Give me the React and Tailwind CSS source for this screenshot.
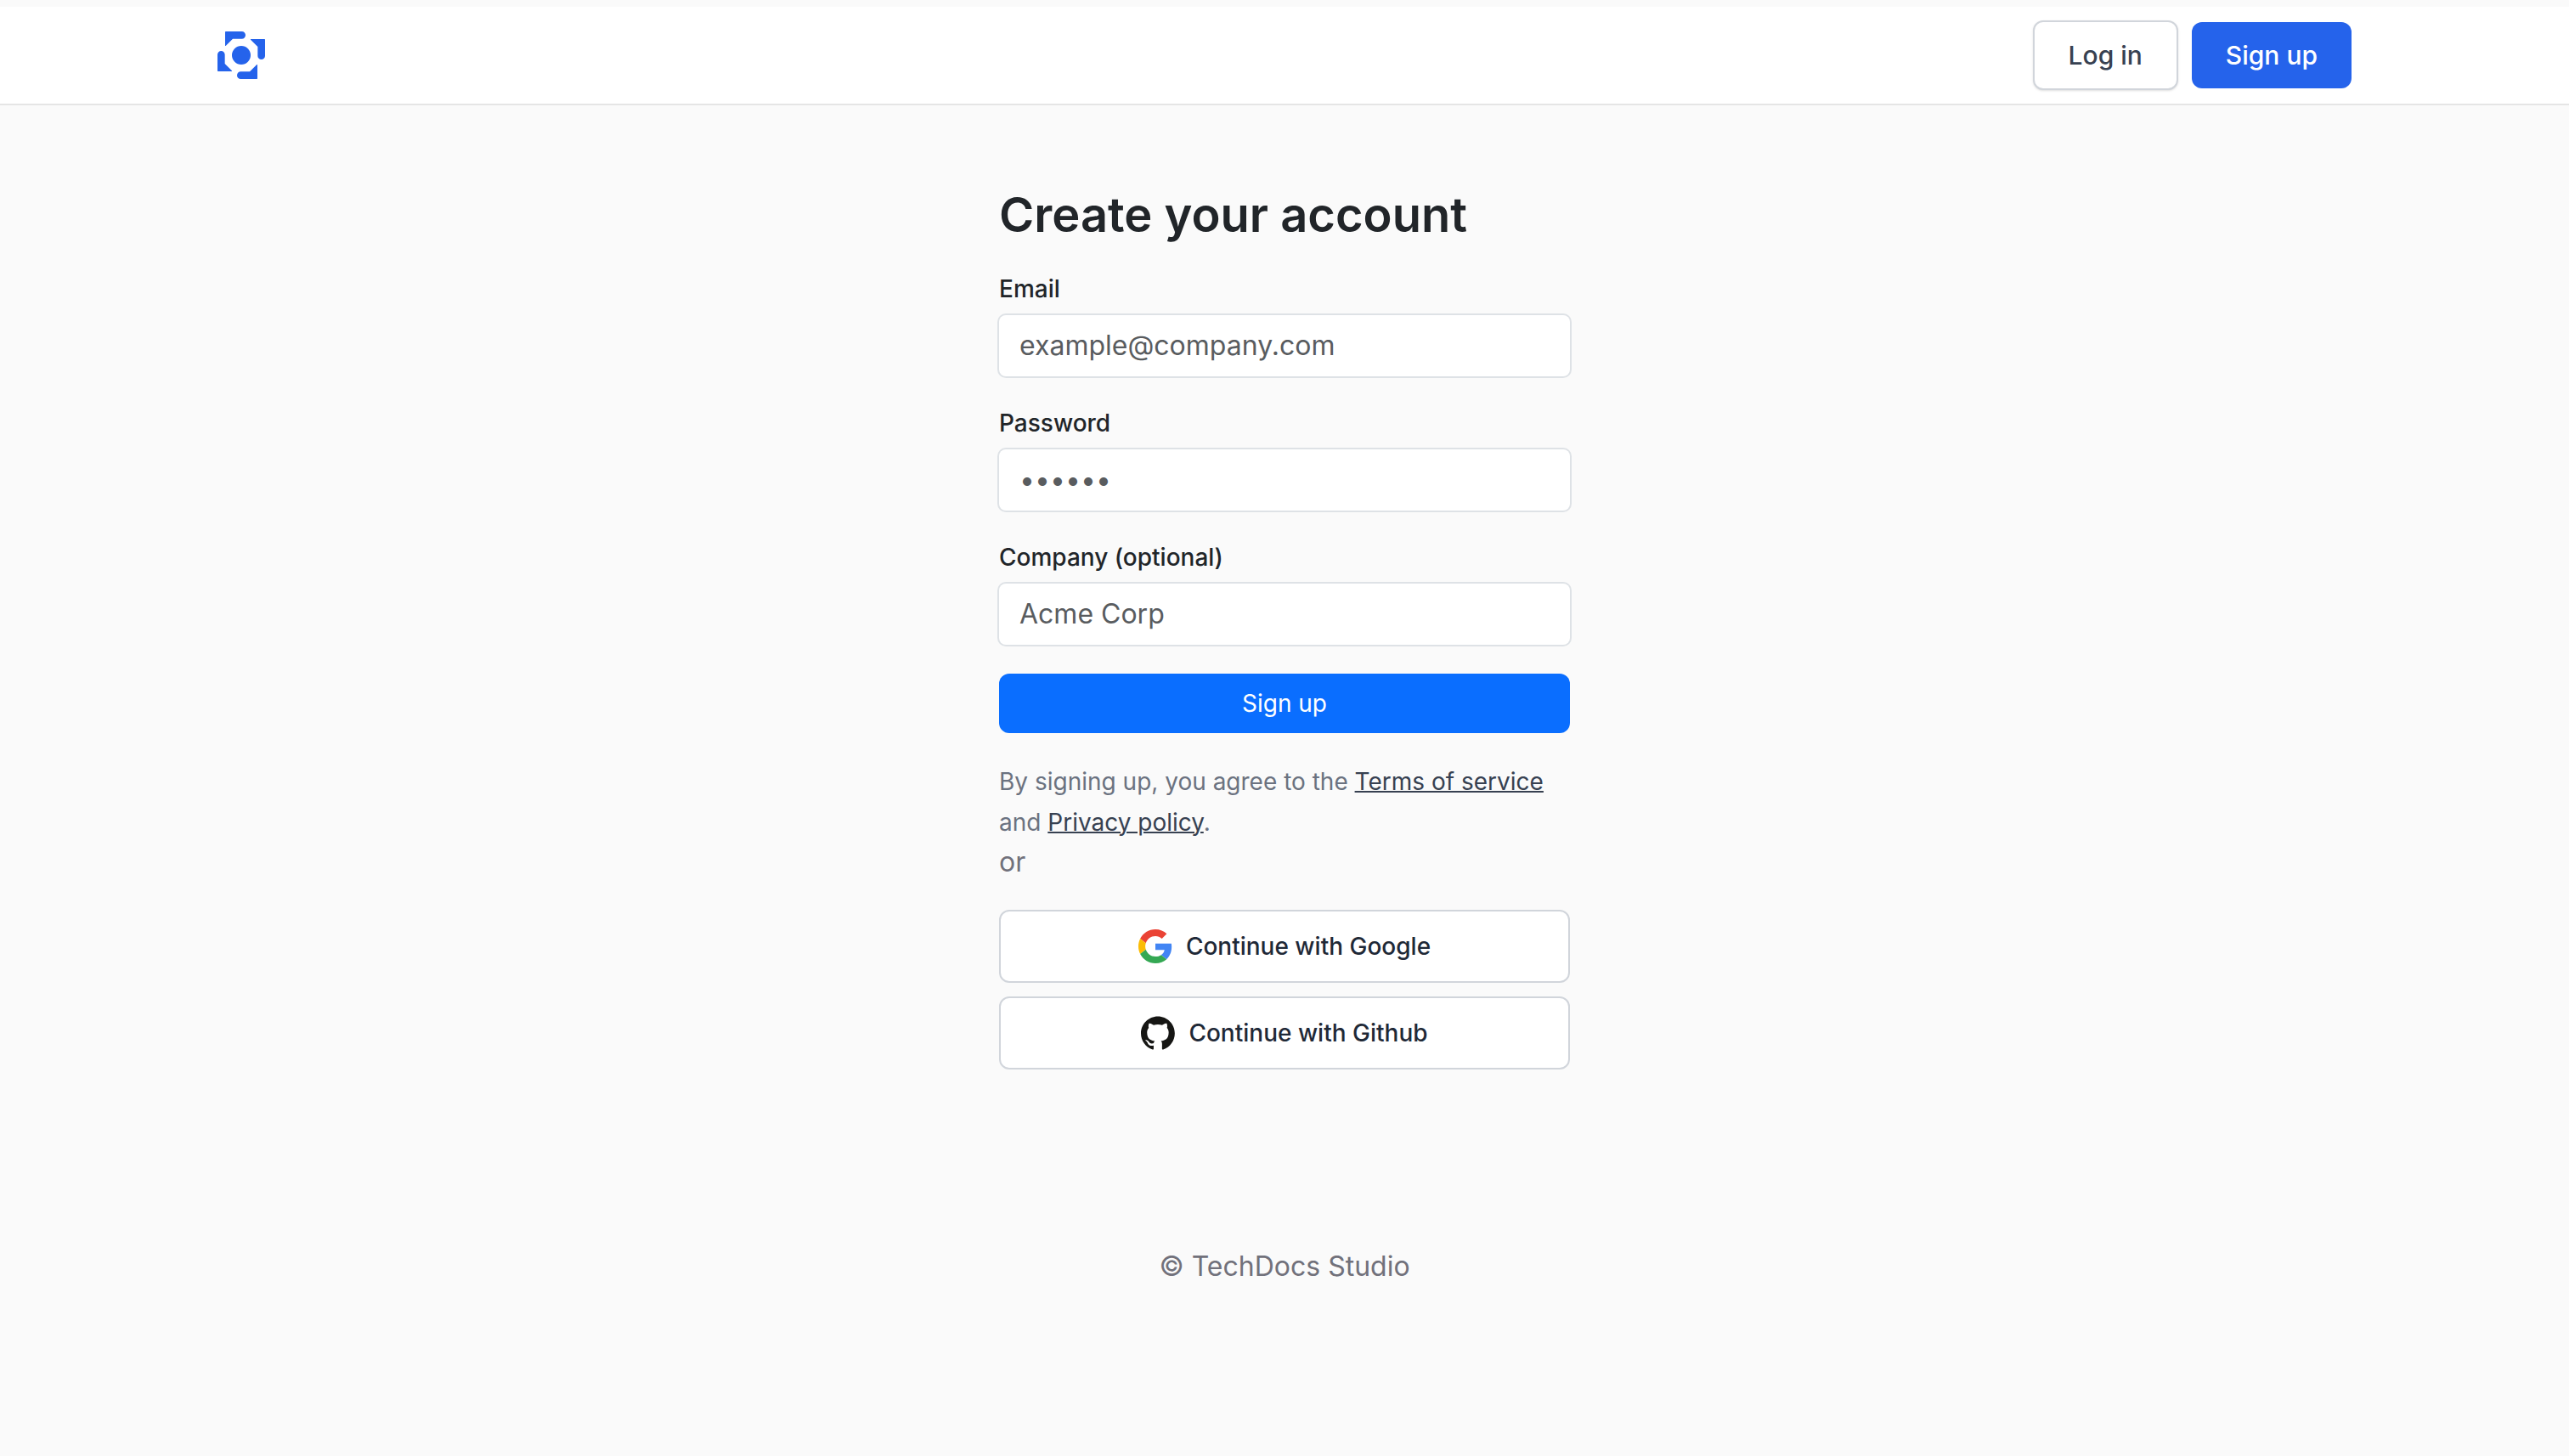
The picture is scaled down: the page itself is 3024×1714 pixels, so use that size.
const labelStyle = "block text-[28px] leading-[42px] font-medium text-[#212529]";
const fieldStyle = "mt-[10px] block h-[72px] w-full rounded-lg bg-white px-6 pb-0.5 text-[32px] text-[#212529] ring-2 ring-[#dee2e6] placeholder:text-[#595c5f] focus:outline-none focus:ring-[#2563eb]";
const socialStyle = "flex h-[86px] w-full items-center justify-center gap-4 rounded-xl border-2 border-[#d1d5db] bg-white text-[28px] font-medium text-[#1f2937]";
const linkStyle = "text-[#374151] underline decoration-2";

const fields = [
  { id: 'email', label: 'Email', type: 'email', placeholder: 'example@company.com' },
  { id: 'password', label: 'Password', type: 'password', placeholder: '••••••' },
  { id: 'company', label: 'Company (optional)', type: 'text', placeholder: 'Acme Corp' },
];

function Logo() {
  return (
    <svg viewBox="0 0 168 168" className="size-14 fill-[#2563eb]" aria-hidden="true">
      {[0, 90, 180, 270].map((angle) => (
        <path
          key={angle}
          transform={`rotate(${angle} 84 84)`}
          d="M29 0H86A13 13 0 0 1 86 26H54L29 51Q27 52 27 50V2Q27 0 29 0Z"
        />
      ))}
      <circle cx="84" cy="84" r="33" />
    </svg>
  );
}

function GoogleIcon() {
  return (
    <svg viewBox="0 0 48 48" className="size-10" aria-hidden="true">
      <path fill="#EA4335" d="M24 9.5c3.54 0 6.71 1.22 9.21 3.6l6.85-6.85C35.9 2.38 30.47 0 24 0 14.62 0 6.51 5.38 2.56 13.22l7.98 6.19C12.43 13.72 17.74 9.5 24 9.5z" />
      <path fill="#4285F4" d="M46.98 24.55c0-1.57-.15-3.09-.38-4.55H24v9.02h12.94c-.58 2.96-2.26 5.48-4.78 7.18l7.73 6c4.51-4.18 7.09-10.36 7.09-17.65z" />
      <path fill="#FBBC05" d="M10.53 28.59c-.48-1.45-.76-2.99-.76-4.59s.27-3.14.76-4.59l-7.98-6.19C.92 16.46 0 20.12 0 24c0 3.88.92 7.54 2.56 10.78l7.97-6.19z" />
      <path fill="#34A853" d="M24 48c6.48 0 11.93-2.13 15.89-5.81l-7.73-6c-2.15 1.45-4.92 2.3-8.16 2.3-6.26 0-11.57-4.22-13.47-9.91l-7.98 6.19C6.51 42.62 14.62 48 24 48z" />
    </svg>
  );
}

function GithubIcon() {
  return (
    <svg viewBox="0 0 98 96" className="size-10" aria-hidden="true">
      <path
        fill="#161614"
        fillRule="evenodd"
        clipRule="evenodd"
        d="M48.854 0C21.839 0 0 22 0 49.217c0 21.756 13.993 40.172 33.405 46.69 2.427.49 3.316-1.059 3.316-2.362 0-1.141-.08-5.052-.08-9.127-13.59 2.934-16.42-5.867-16.42-5.867-2.184-5.704-5.42-7.17-5.42-7.17-4.448-3.015.324-3.015.324-3.015 4.934.326 7.523 5.052 7.523 5.052 4.367 7.496 11.404 5.378 14.235 4.074.404-3.178 1.699-5.378 3.074-6.6-10.839-1.141-22.243-5.378-22.243-24.283 0-5.378 1.94-9.778 5.014-13.2-.485-1.222-2.184-6.275.486-13.038 0 0 4.125-1.304 13.426 5.052a46.97 46.97 0 0 1 12.214-1.63c4.125 0 8.33.571 12.213 1.63 9.302-6.356 13.427-5.052 13.427-5.052 2.67 6.763.97 11.816.485 13.038 3.155 3.422 5.015 7.822 5.015 13.2 0 18.905-11.404 23.06-22.324 24.283 1.78 1.548 3.316 4.481 3.316 9.126 0 6.6-.08 11.897-.08 13.526 0 1.304.89 2.853 3.316 2.364 19.412-6.52 33.405-24.935 33.405-46.691C97.707 22 75.788 0 48.854 0z"
      />
    </svg>
  );
}

function Header() {
  return (
    <header className="border-b-2 border-neutral-200 bg-white">
      <div className="mx-auto flex max-w-[2560px] items-center justify-between px-6 py-4">
        <a href="#home" aria-label="Home">
          <Logo />
        </a>
        <nav className="flex items-center gap-4 text-[30px] font-medium">
          <button type="button" className="h-[82px] rounded-xl border-2 border-[#d1d5db] bg-white px-10 text-[#374151] shadow-sm">
            Log in
          </button>
          <button type="button" className="h-[78px] rounded-xl bg-[#2563eb] px-10 text-white">
            Sign up
          </button>
        </nav>
      </div>
    </header>
  );
}

function SignupForm() {
  return (
    <div className="mx-auto w-full max-w-[672px]">
      <form className="space-y-[34px]" onSubmit={(e) => e.preventDefault()}>
        <h1 className="text-[56px] leading-[64px] font-semibold text-[#212529]">Create your account</h1>
        {fields.map((field) => (
          <div key={field.id}>
            <label htmlFor={field.id} className={labelStyle}>{field.label}</label>
            <input id={field.id} type={field.type} placeholder={field.placeholder} className={fieldStyle} />
          </div>
        ))}
        <button type="submit" className="h-[70px] w-full rounded-xl bg-[#0a6eff] text-[28px] text-white">
          Sign up
        </button>
      </form>
      <p className="mt-[33px] text-[28px] leading-[48px] text-[#6b7280]">
        By signing up, you agree to the <a href="#terms" className={linkStyle}>Terms of service</a> and{' '}
        <a href="#privacy" className={linkStyle}>Privacy policy</a>.
      </p>
      <p className="text-[32px] leading-[46px] text-zinc-500">or</p>
      <div className="mt-[33px] space-y-4">
        <button type="button" className={socialStyle}>
          <GoogleIcon />
          Continue with Google
        </button>
        <button type="button" className={socialStyle}>
          <GithubIcon />
          Continue with Github
        </button>
      </div>
    </div>
  );
}

export default function App() {
  return (
    <div className="min-h-screen bg-neutral-50 pt-2 font-[Inter,sans-serif]">
      <Header />
      <main className="pt-[97px]">
        <SignupForm />
      </main>
      <footer className="py-52 text-center text-[32px] leading-[48px] text-zinc-500">© TechDocs Studio</footer>
    </div>
  );
}
